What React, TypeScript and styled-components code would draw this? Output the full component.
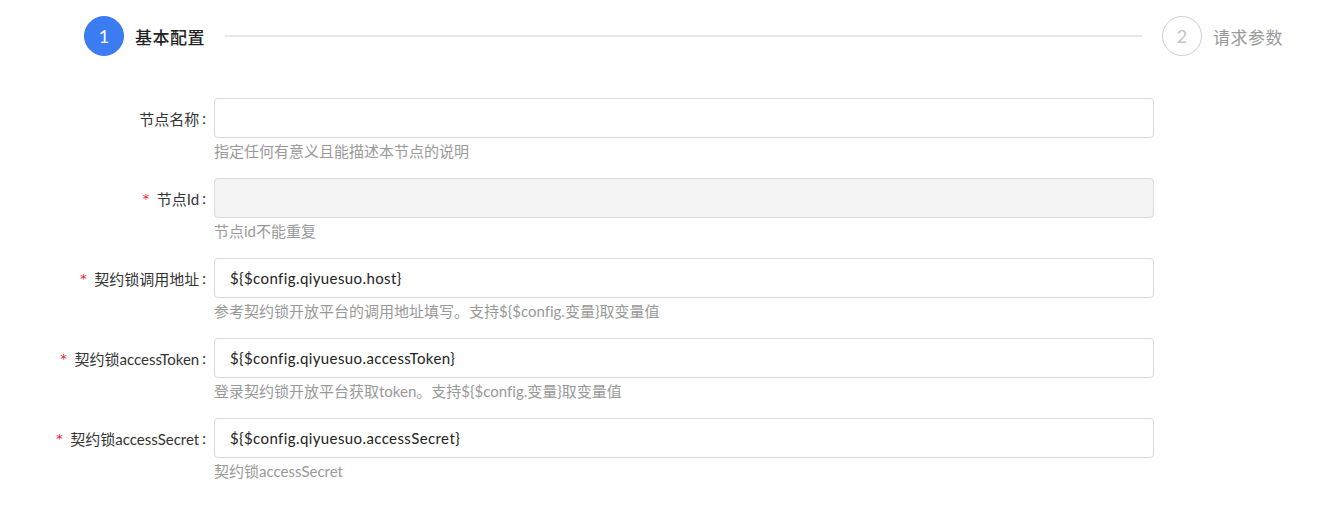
import React from "react";
import styled, { createGlobalStyle } from "styled-components";

const GlobalStyle = createGlobalStyle`
  body {
    margin: 0;
    background: #fff;
    font-family: "Lato", "Noto Sans CJK SC", sans-serif;
    font-variant-ligatures: none;
    color: #333;
  }
`;

interface Field {
  label: string;
  required?: boolean;
  value?: string;
  disabled?: boolean;
  help: string;
}

const fields: Field[] = [
  { label: "节点名称", help: "指定任何有意义且能描述本节点的说明" },
  { label: "节点Id", required: true, disabled: true, help: "节点id不能重复" },
  {
    label: "契约锁调用地址",
    required: true,
    value: "${$config.qiyuesuo.host}",
    help: "参考契约锁开放平台的调用地址填写。支持${$config.变量}取变量值",
  },
  {
    label: "契约锁accessToken",
    required: true,
    value: "${$config.qiyuesuo.accessToken}",
    help: "登录契约锁开放平台获取token。支持${$config.变量}取变量值",
  },
  {
    label: "契约锁accessSecret",
    required: true,
    value: "${$config.qiyuesuo.accessSecret}",
    help: "契约锁accessSecret",
  },
];

const App = () => {
  return (
    <>
      <GlobalStyle />
      <S.Page>
        <S.Steps>
          <S.Step>
            <S.StepIcon active>1</S.StepIcon>
            <S.StepTitle active>基本配置</S.StepTitle>
          </S.Step>
          <S.StepLine />
          <S.Step>
            <S.StepIcon>2</S.StepIcon>
            <S.StepTitle>请求参数</S.StepTitle>
          </S.Step>
        </S.Steps>
        <S.Form>
          {fields.map((f, i) => (
            <S.Row key={i}>
              <S.Label>
                {f.required && <S.Star>*</S.Star>}
                {f.label}
              </S.Label>
              <S.Control>
                <S.Input
                  disabled={f.disabled}
                  defaultValue={f.value || ""}
                  readOnly
                />
                <S.Help>{f.help}</S.Help>
              </S.Control>
            </S.Row>
          ))}
        </S.Form>
      </S.Page>
    </>
  );
};

export default App;

const S = {
  Page: styled.div`
    width: 1326px;
    padding-top: 16px;
  `,
  Steps: styled.div`
    display: flex;
    align-items: center;
    padding: 0 43px 0 84px;
    height: 40px;
  `,
  Step: styled.div`
    display: flex;
    align-items: center;
  `,
  StepIcon: styled.div<{ active?: boolean }>`
    width: 40px;
    height: 40px;
    box-sizing: border-box;
    border-radius: 50%;
    display: flex;
    align-items: center;
    justify-content: center;
    font-size: 18px;
    background: ${(p) => (p.active ? "#3b7cf0" : "#fff")};
    border: 1px solid ${(p) => (p.active ? "#3b7cf0" : "#cfcfcf")};
    color: ${(p) => (p.active ? "#fff" : "#c4c4c4")};
  `,
  StepTitle: styled.div<{ active?: boolean }>`
    margin-left: 11px;
    font-size: 17px;
    letter-spacing: 0.5px;
    font-weight: ${(p) => (p.active ? 500 : 400)};
    color: ${(p) => (p.active ? "#222" : "#999")};
  `,
  StepLine: styled.div`
    flex: 1;
    height: 2px;
    background: #e8e8e8;
    margin: 0 20px;
  `,
  Form: styled.div`
    margin-top: 42px;
  `,
  Row: styled.div`
    display: flex;
    margin-bottom: 16px;
  `,
  Label: styled.label`
    width: 214px;
    flex: none;
    height: 40px;
    display: flex;
    align-items: center;
    justify-content: flex-end;
    font-size: 15px;
    color: #333;
    &::after {
      content: ":";
      margin: 0 8px 0 3px;
    }
  `,
  Star: styled.span`
    color: #f5222d;
    margin-right: 7px;
    font-family: "DejaVu Sans Mono", monospace;
    font-size: 13px;
  `,
  Control: styled.div`
    width: 940px;
  `,
  Input: styled.input`
    display: block;
    width: 100%;
    box-sizing: border-box;
    height: 40px;
    border: 1px solid #d9d9d9;
    border-radius: 4px;
    padding: 0 15px;
    font-family: inherit;
    font-variant-ligatures: none;
    font-size: 15px;
    letter-spacing: 0.4px;
    color: #222;
    background: #fff;
    outline: none;
    &:disabled {
      background: #f4f4f4;
    }
  `,
  Help: styled.div`
    padding-top: 2px;
    line-height: 22px;
    font-size: 15px;
    color: #999;
  `,
};
